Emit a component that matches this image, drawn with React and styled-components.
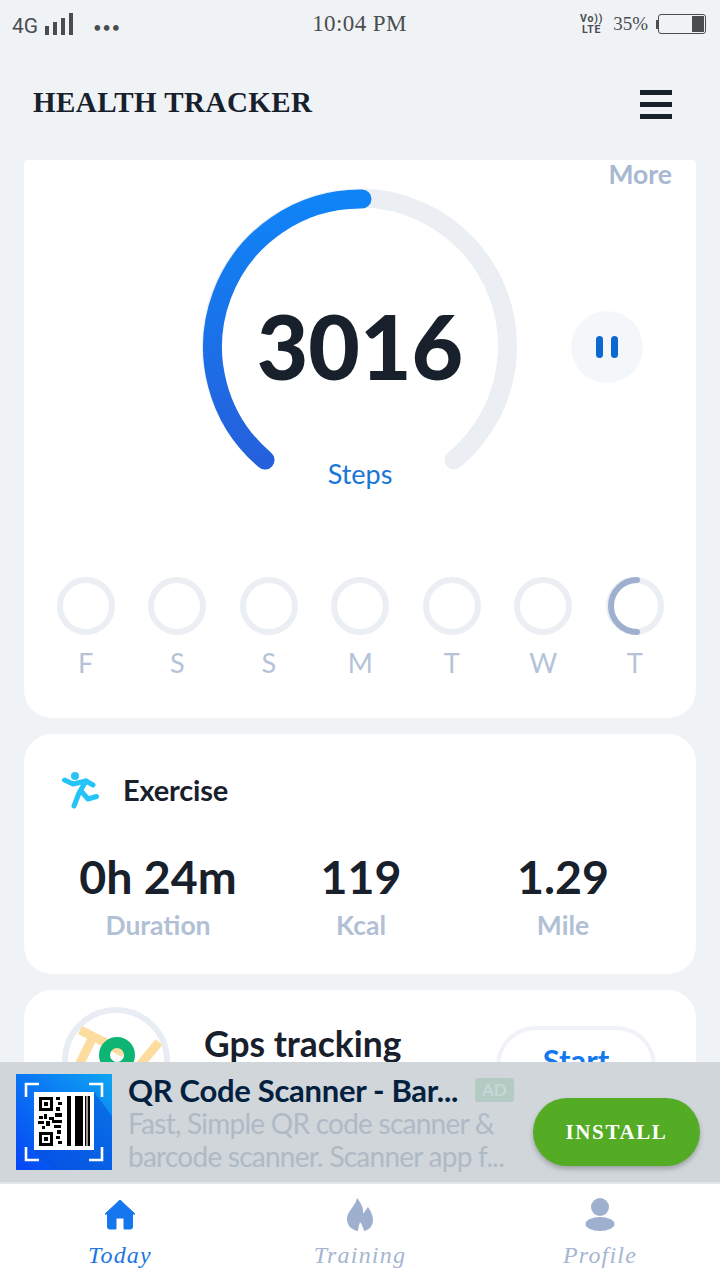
import styled, { createGlobalStyle } from 'styled-components'

const GlobalStyle = createGlobalStyle`
   html, body {
      margin: 0;
      padding: 0;
      background: #eff3f6;
   }
   * {
      box-sizing: border-box;
   }
`

const days = [
   { label: "F" },
   { label: "S" },
   { label: "S" },
   { label: "M" },
   { label: "T" },
   { label: "W" },
   { label: "T", active: true },
]

const stats = [
   { value: "0h 24m", label: "Duration", width: 268 },
   { value: "119", label: "Kcal", width: 138 },
   { value: "1.29", label: "Mile", width: 266 },
]

function Gauge() {
   return (
      <GaugeSvg viewBox="0 0 320 300" width="320" height="300">
         <defs>
            <linearGradient id="gaugeBlue" x1="0" y1="0" x2="0" y2="1">
               <stop offset="0" stopColor="#0f84f7" />
               <stop offset="1" stopColor="#2560dc" />
            </linearGradient>
         </defs>
         <path d="M 66 273 A 148 148 0 1 1 255 273" fill="none" stroke="#ebeff4" strokeWidth="19" strokeLinecap="round" />
         <path d="M 66 273 A 148 148 0 0 1 163 12" fill="none" stroke="url(#gaugeBlue)" strokeWidth="19" strokeLinecap="round" />
      </GaugeSvg>
   )
}

function DayRing({ active }) {
   return (
      <svg width="58" height="58" viewBox="0 0 58 58">
         <circle cx="29" cy="29" r="26" fill="none" stroke="#ebeff4" strokeWidth="6" />
         {active && (
            <path d="M 31 3 A 26 26 0 0 0 31 55" fill="none" stroke="#9fb0cf" strokeWidth="6" strokeLinecap="round" />
         )}
      </svg>
   )
}

function RunnerIcon() {
   return (
      <svg width="38" height="38" viewBox="0 0 38 38" fill="none" stroke="#25c4f8" strokeWidth="5" strokeLinecap="round" strokeLinejoin="round">
         <circle cx="14" cy="5" r="4" fill="#25c4f8" stroke="none" />
         <path d="M3.5 9 L12 13 L25 10 L32 14" />
         <path d="M25 10 L18 22 L13 35" />
         <path d="M20 20 L27 28 L35.5 25.5" />
      </svg>
   )
}

function QrIcon() {
   return (
      <svg width="96" height="96" viewBox="0 0 96 96">
         <defs>
            <linearGradient id="qrBg" x1="1" y1="0" x2="0" y2="1">
               <stop offset="0" stopColor="#0fa4f2" />
               <stop offset="1" stopColor="#0544f5" />
            </linearGradient>
         </defs>
         <rect width="96" height="96" fill="url(#qrBg)" />
         <path d="M78 18 L96 42 V96 H38 L18 78 Z" fill="#0650d8" opacity="0.55" />
         <path d="M23 10 H10 V23 M73 10 H86 V23 M10 73 V86 H23 M86 73 V86 H73" fill="none" stroke="#fff" strokeWidth="2.6" />
         <rect x="18" y="18" width="60" height="58" fill="#fff" />
         <g fill="none" stroke="#000" strokeWidth="3">
            <rect x="24.5" y="24.5" width="11" height="11" />
            <rect x="24.5" y="59.5" width="11" height="11" />
         </g>
         <g fill="#000">
            <rect x="28" y="28" width="4" height="4" />
            <rect x="28" y="63" width="4" height="4" />
            <path d="M40 23h4v3h-4zM42 28h4v3h-4zM40 33h4v4h-4zM23 42h4v3h-4zM28 40h3v5h-3zM33 43h5v3h-5zM39 39h7v4h-7zM22 47h6v3h-6zM30 47h4v5h-4zM36 46h10v3h-10zM26 52h3v3h-3zM38 51h7v3h-7zM41 56h4v4h-4zM40 62h4v3h-4zM42 67h4v3h-4z" />
            <rect x="51" y="22" width="4" height="50" />
            <rect x="59" y="22" width="8" height="50" />
            <rect x="69" y="22" width="1.4" height="50" />
            <rect x="71.6" y="22" width="2.4" height="50" />
         </g>
      </svg>
   )
}

function App() {
   return (
      <>
      <GlobalStyle />
      <Screen>
         <StatusBar>
            <StatusLeft>
               <Network>4G</Network>
               <Signal>
                  <SignalBar $h={9} />
                  <SignalBar $h={13} />
                  <SignalBar $h={17} />
                  <SignalBar $h={22} />
               </Signal>
               <Dots>•••</Dots>
            </StatusLeft>
            <Clock>10:04 PM</Clock>
            <StatusRight>
               <Volte>Vo))<br />LTE</Volte>
               <Percent>35%</Percent>
               <BatteryNub />
               <Battery><BatteryFill /></Battery>
            </StatusRight>
         </StatusBar>

         <Header>
            <Title>HEALTH TRACKER</Title>
            <Menu>
               <MenuLine />
               <MenuLine />
               <MenuLine />
            </Menu>
         </Header>

         <Content>
            <StepsCard>
               <More>More</More>
               <GaugeRow>
                  <Gauge />
                  <StepCount>3016</StepCount>
                  <StepLabel>Steps</StepLabel>
                  <PauseButton>
                     <PauseBar />
                     <PauseBar />
                  </PauseButton>
               </GaugeRow>
               <Days>
                  {days.map((day, i) => (
                     <Day key={i}>
                        <DayRing active={day.active} />
                        <DayLabel>{day.label}</DayLabel>
                     </Day>
                  ))}
               </Days>
            </StepsCard>

            <ExerciseCard>
               <ExerciseHead>
                  <RunnerIcon />
                  <ExerciseTitle>Exercise</ExerciseTitle>
               </ExerciseHead>
               <Stats>
                  {stats.map((stat) => (
                     <Stat key={stat.label} $width={stat.width}>
                        <StatValue>{stat.value}</StatValue>
                        <StatLabel>{stat.label}</StatLabel>
                     </Stat>
                  ))}
               </Stats>
            </ExerciseCard>

            <GpsCard>
               <GpsMap>
                  <svg width="108" height="108" viewBox="0 0 108 108">
                     <circle cx="54" cy="54" r="51" fill="#fff" stroke="#e8edf3" strokeWidth="6" />
                     <path d="M18 23 L46 37 L62 46 M31 30 L17 58 M97 35 L78 58" fill="none" stroke="#fddc9f" strokeWidth="9" />
                     <circle cx="55" cy="48" r="12.5" fill="none" stroke="#0cb574" strokeWidth="11" />
                  </svg>
               </GpsMap>
               <GpsTitle>Gps tracking</GpsTitle>
               <StartButton>Start</StartButton>
            </GpsCard>
         </Content>

         <AdBar>
            <QrIcon />
            <AdText>
               <AdHead>
                  <AdTitle>QR Code Scanner - Bar...</AdTitle>
                  <AdBadge>AD</AdBadge>
               </AdHead>
               <AdBody>Fast, Simple QR code scanner &amp;<br />barcode scanner. Scanner app f...</AdBody>
            </AdText>
            <InstallButton>INSTALL</InstallButton>
         </AdBar>

         <TabBar>
            <Tab $active>
               <svg width="34" height="32" viewBox="0 0 34 32">
                  <path d="M17 2 L32 16 L29.5 16 L29.5 29 Q29.5 31 27.5 31 L21 31 L21 20 L13 20 L13 31 L6.5 31 Q4.5 31 4.5 29 L4.5 16 L2 16 Z" fill="#1477ee" stroke="#1477ee" strokeWidth="1" strokeLinejoin="round" />
               </svg>
               <TabLabel>Today</TabLabel>
            </Tab>
            <Tab>
               <svg width="34" height="34" viewBox="0 0 34 34">
                  <path d="M14 0 C17 4 21 9 20 16 C21 14 23 12 25 9 C28 13 30 18 30 22 C30 28 26 32 21 33 C20 29 19 27 17 24 C16 28 15 31 15 33 C8 32 4 27 4 21 C4 13 12 9 14 0 Z" fill="#9fb0cf" />
               </svg>
               <TabLabel $icon={34}>Training</TabLabel>
            </Tab>
            <Tab>
               <svg width="34" height="34" viewBox="0 0 34 34">
                  <circle cx="17" cy="9" r="9" fill="#9fb0cf" />
                  <ellipse cx="17" cy="26" rx="14.5" ry="7" fill="#9fb0cf" />
               </svg>
               <TabLabel $icon={34}>Profile</TabLabel>
            </Tab>
         </TabBar>
      </Screen>
      </>
   )
}

const Screen = styled.div`
   width: 720px;
   height: 1280px;
   display: flex;
   flex-direction: column;
   overflow: hidden;
   background: #eff3f6;
   font-family: Lato, "Noto Sans", sans-serif;
`

const StatusBar = styled.div`
   height: 48px;
   flex: none;
   display: grid;
   grid-template-columns: 1fr auto 1fr;
   align-items: center;
   padding: 0 14px 0 12px;
   color: #4a4d50;
`

const StatusLeft = styled.div`
   display: flex;
   align-items: flex-end;
`

const Network = styled.span`
   font-family: Roboto, sans-serif;
   font-size: 21px;
   line-height: 22px;
   margin-top: 4px;
`

const Signal = styled.div`
   display: flex;
   align-items: flex-end;
   gap: 4px;
   margin-left: 7px;
   margin-bottom: 2px;
`

const SignalBar = styled.div`
   width: 4px;
   height: ${(props) => props.$h}px;
   background: #4a4d50;
`

const Dots = styled.span`
   font-size: 15px;
   line-height: 20px;
   letter-spacing: 0.5px;
   margin-left: 20px;
`

const Clock = styled.div`
   font-family: "Liberation Serif", serif;
   font-size: 23px;
   letter-spacing: 0.4px;
   margin-left: 1px;
`

const StatusRight = styled.div`
   display: flex;
   align-items: center;
   justify-content: flex-end;
`

const Volte = styled.div`
   font-family: Roboto, sans-serif;
   font-size: 10.5px;
   line-height: 11px;
   font-weight: 700;
   letter-spacing: 0.8px;
   text-align: center;
`

const Percent = styled.span`
   font-family: "Liberation Serif", serif;
   font-size: 19px;
   margin-left: 10px;
`

const BatteryNub = styled.div`
   width: 2px;
   height: 9px;
   margin-left: 8px;
   background: #4a4d50;
`

const Battery = styled.div`
   width: 48px;
   height: 20px;
   padding: 1px;
   display: flex;
   justify-content: flex-end;
   border: 1.5px solid #4a4d50;
   border-radius: 3px;
`

const BatteryFill = styled.div`
   width: 12px;
   background: #4a4d50;
`

const Header = styled.div`
   height: 112px;
   flex: none;
   display: flex;
   align-items: flex-start;
   justify-content: space-between;
   padding: 37px 48px 0 33px;
`

const Title = styled.h1`
   margin: 0;
   font-family: "Liberation Serif", serif;
   font-weight: 700;
   font-size: 29px;
   line-height: 34px;
   letter-spacing: 0.45px;
   color: #18202c;
`

const Menu = styled.div`
   width: 32px;
   display: flex;
   flex-direction: column;
   gap: 7px;
   margin-top: 5px;
`

const MenuLine = styled.div`
   height: 5px;
   background: #18202c;
`

const Content = styled.div`
   flex: 1;
   min-height: 0;
   display: flex;
   flex-direction: column;
   gap: 16px;
   padding: 0 24px;
`

const StepsCard = styled.section`
   position: relative;
   height: 558px;
   flex: none;
   background: #fff;
   border-radius: 4px 4px 28px 28px;
`

const More = styled.a`
   position: absolute;
   top: -1px;
   right: 24px;
   font-size: 26.5px;
   line-height: 30px;
   font-weight: 700;
   color: #a8b7d2;
`

const GaugeRow = styled.div`
   position: relative;
   height: 417px;
`

const GaugeSvg = styled.svg`
   position: absolute;
   left: 175px;
   top: 27px;
`

const StepCount = styled.div`
   position: absolute;
   left: 0;
   right: 0;
   top: 130px;
   text-align: center;
   font-size: 89px;
   line-height: 112px;
   font-weight: 900;
   color: #18202c;
`

const StepLabel = styled.div`
   position: absolute;
   left: 0;
   right: 0;
   top: 296px;
   text-align: center;
   font-size: 27px;
   line-height: 36px;
   color: #1a76d8;
`

const PauseButton = styled.div`
   position: absolute;
   left: 547px;
   top: 151px;
   width: 72px;
   height: 72px;
   display: flex;
   align-items: center;
   justify-content: center;
   gap: 8px;
   border-radius: 50%;
   background: #f4f7f9;
`

const PauseBar = styled.div`
   width: 7px;
   height: 22px;
   border-radius: 4px;
   background: #0b68d2;
`

const Days = styled.div`
   display: flex;
   justify-content: space-between;
   padding: 0 32.25px 0 32.75px;
`

const Day = styled.div`
   width: 58px;
   display: flex;
   flex-direction: column;
   align-items: center;
`

const DayLabel = styled.div`
   margin-top: 10px;
   font-size: 27px;
   line-height: 36px;
   color: #b5c3d8;
`

const ExerciseCard = styled.section`
   height: 240px;
   flex: none;
   padding: 36px 0 0;
   background: #fff;
   border-radius: 28px;
`

const ExerciseHead = styled.div`
   display: flex;
   align-items: center;
   gap: 24px;
   padding-left: 37px;
`

const ExerciseTitle = styled.h2`
   margin: 0;
   font-size: 29px;
   line-height: 40px;
   font-weight: 700;
   letter-spacing: -0.2px;
   color: #18202c;
`

const Stats = styled.div`
   display: flex;
   margin-top: 39px;
`

const Stat = styled.div`
   width: ${(props) => props.$width}px;
   display: flex;
   flex-direction: column;
   align-items: center;
`

const StatValue = styled.div`
   font-size: 46.5px;
   line-height: 54px;
   font-weight: 700;
   color: #18202c;
`

const StatLabel = styled.div`
   margin-top: 6px;
   font-size: 26.5px;
   line-height: 32px;
   font-weight: 700;
   color: #b2c0d6;
`

const GpsCard = styled.section`
   height: 180px;
   flex: none;
   display: flex;
   align-items: flex-start;
   background: #fff;
   border-radius: 28px;
   padding: 17px 40px 0 38px;
`

const GpsMap = styled.div`
   width: 108px;
   height: 108px;
   flex: none;
`

const GpsTitle = styled.h2`
   margin: 15px 0 0 34px;
   font-size: 35.4px;
   line-height: 44px;
   font-weight: 700;
   color: #18202c;
`

const StartButton = styled.div`
   width: 160px;
   height: 80px;
   margin: 19px 0 0 auto;
   padding-top: 12px;
   text-align: center;
   font-size: 31px;
   line-height: 36px;
   font-weight: 700;
   color: #1477ee;
   border: 4px solid #eff2f6;
   border-radius: 40px;
`

const AdBar = styled.div`
   height: 122px;
   flex: none;
   margin-top: -122px;
   position: relative;
   display: flex;
   align-items: flex-start;
   padding: 12px 20px 0 16px;
   background: #d0d6da;
   border-bottom: 2px solid #e2e7eb;
`

const AdText = styled.div`
   width: 400px;
   margin: -2px 0 0 16px;
   flex: none;
   min-width: 0;
`

const AdHead = styled.div`
   display: flex;
   align-items: center;
`

const AdTitle = styled.div`
   font-size: 31px;
   line-height: 36px;
   font-weight: 700;
   letter-spacing: -0.3px;
   color: #03213f;
   white-space: nowrap;
`

const AdBadge = styled.span`
   margin-left: 17px;
   padding: 0 7px;
   font-size: 17px;
   line-height: 24px;
   font-weight: 700;
   color: #c5d8d3;
   background: #b4cbc4;
   border-radius: 3px;
`

const AdBody = styled.div`
   margin-top: -1px;
   font-size: 28px;
   line-height: 33px;
   letter-spacing: -0.75px;
   color: #afbac5;
   white-space: nowrap;
`

const InstallButton = styled.div`
   width: 167px;
   height: 68px;
   margin: 24px 0 0 auto;
   flex: none;
   display: flex;
   align-items: center;
   justify-content: center;
   font-family: "Liberation Serif", serif;
   font-weight: 700;
   font-size: 21px;
   letter-spacing: 1.6px;
   color: #fff;
   background: #54ab24;
   border-radius: 34px;
   box-shadow: 0 3px 5px rgba(0, 0, 0, 0.25);
`

const TabBar = styled.nav`
   height: 96px;
   flex: none;
   display: flex;
   background: #fff;
`

const Tab = styled.div`
   flex: 1;
   display: flex;
   flex-direction: column;
   align-items: center;
   padding-top: 14px;
   color: ${(props) => (props.$active ? "#1a76e0" : "#a5b5d2")};
`

const TabLabel = styled.div`
   margin-top: ${(props) => (props.$icon ? 8 : 10)}px;
   font-family: "Liberation Serif", serif;
   font-style: italic;
   font-size: 24px;
   line-height: 30px;
   letter-spacing: 1.2px;
`

export default App
